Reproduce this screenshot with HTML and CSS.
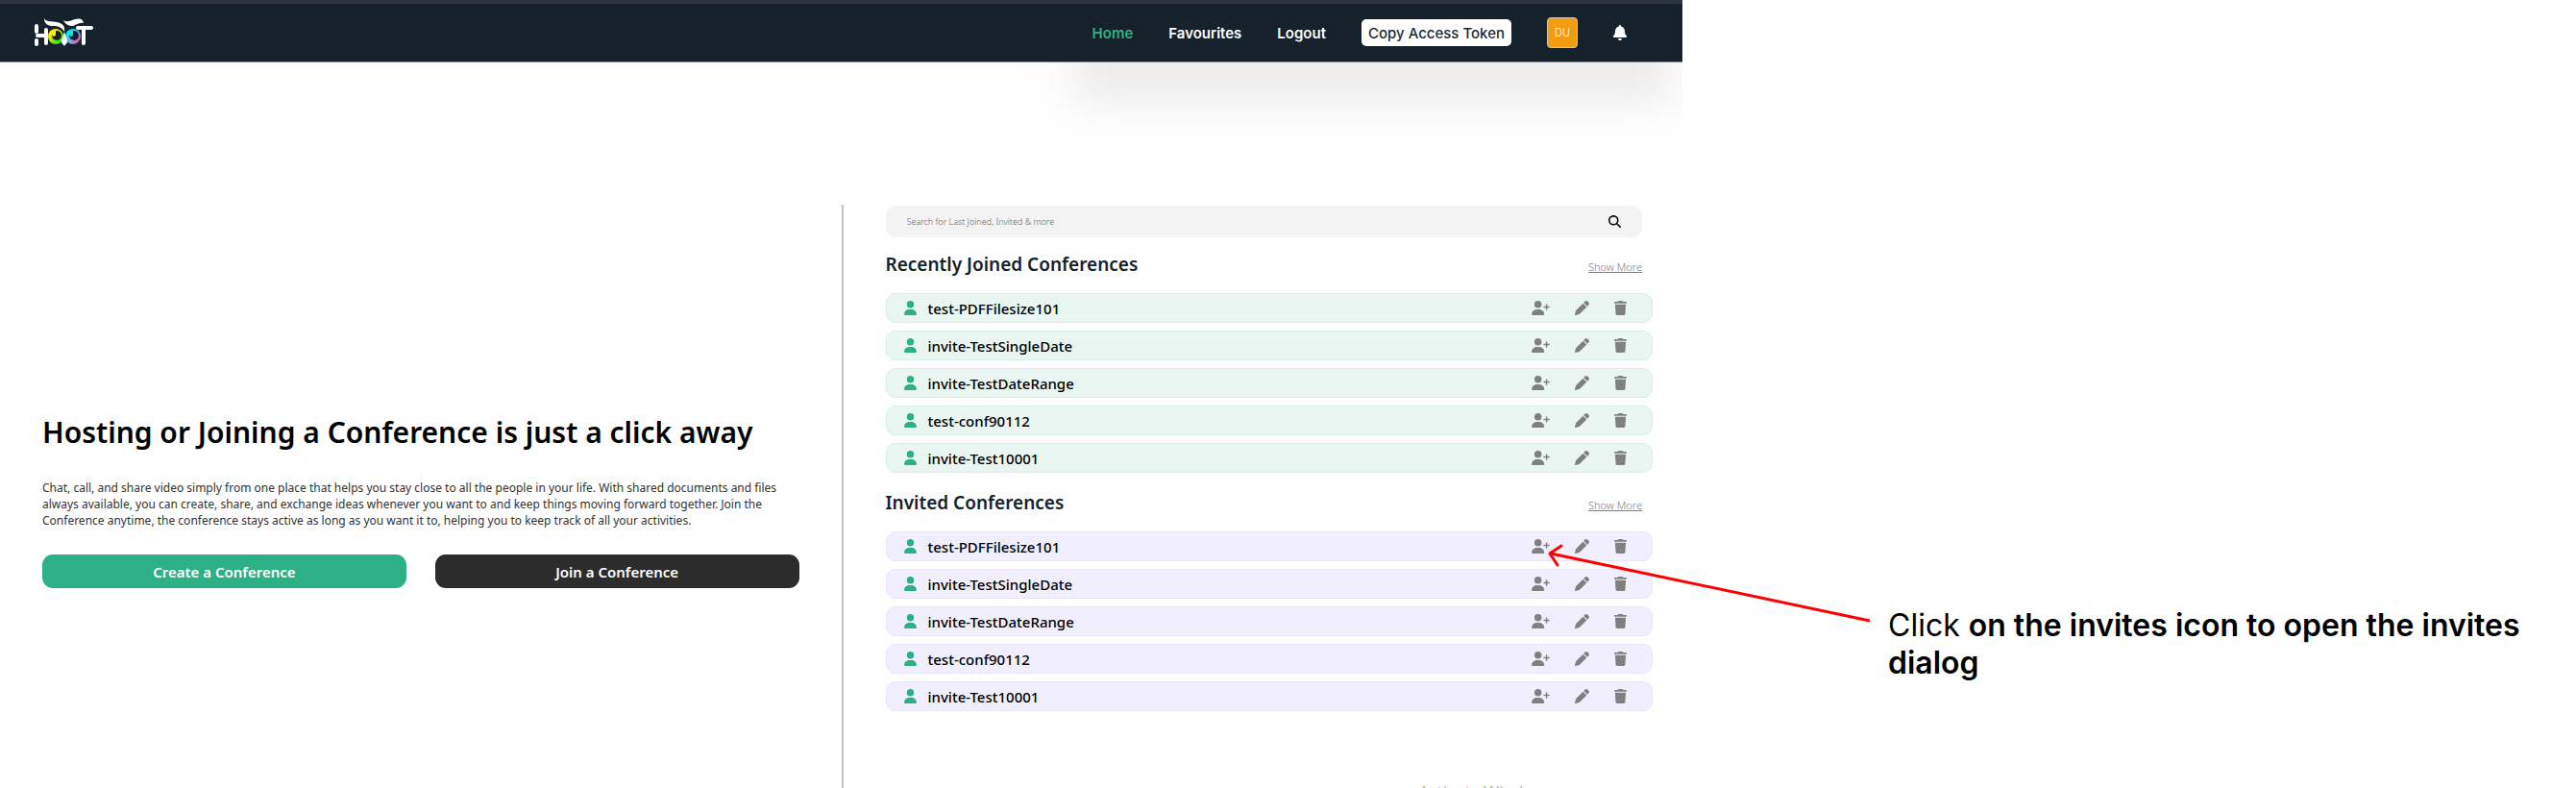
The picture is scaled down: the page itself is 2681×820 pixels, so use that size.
FILE: index.html
```html
<!DOCTYPE html>
<html lang="en">
<head>
<meta charset="utf-8">
<title>Hoot</title>
<link rel="stylesheet" href="styles.css">
</head>
<body>
<svg class="sprite" aria-hidden="true">
  <symbol id="user" viewBox="0 0 448 512"><path d="M224 256A128 128 0 1 0 224 0a128 128 0 1 0 0 256zm-45.700 48C79.800 304 0 383.800 0 482.300C0 498.700 13.300 512 29.700 512H418.300c16.400 0 29.700-13.300 29.700-29.700C448 383.800 368.200 304 269.700 304H178.300z"/></symbol>
  <symbol id="user-plus" viewBox="0 0 640 512"><path d="M96 128a128 128 0 1 1 256 0A128 128 0 1 1 96 128zM0 482.300C0 383.800 79.800 304 178.300 304h91.400C368.200 304 448 383.800 448 482.300c0 16.400-13.300 29.700-29.700 29.700H29.700C13.300 512 0 498.700 0 482.300zM504 312V248H440c-13.300 0-24-10.700-24-24s10.700-24 24-24h64V136c0-13.300 10.700-24 24-24s24 10.700 24 24v64h64c13.300 0 24 10.700 24 24s-10.700 24-24 24H552v64c0 13.300-10.700 24-24 24s-24-10.700-24-24z"/></symbol>
  <symbol id="pen" viewBox="0 0 512 512"><path d="M362.700 19.300L314.300 67.700 444.300 197.700l48.400-48.400c25-25 25-65.500 0-90.500L453.300 19.300c-25-25-65.500-25-90.500 0zm-71 71L58.600 323.500c-10.400 10.400-18 23.300-22.200 37.400L1 481.200C-1.500 489.700 .8 498.800 7 505s15.300 8.500 23.700 6.100l120.300-35.400c14.100-4.200 27-11.800 37.400-22.200L421.700 220.300 291.700 90.300z"/></symbol>
  <symbol id="trash" viewBox="0 0 448 512"><path d="M135.200 17.700L128 32H32C14.300 32 0 46.300 0 64S14.300 96 32 96H416c17.700 0 32-14.300 32-32s-14.300-32-32-32H320l-7.200-14.300C307.400 6.800 296.300 0 284.200 0H163.800c-12.100 0-23.200 6.800-28.600 17.700zM416 128H32L53.200 467c1.600 25.300 22.600 45 47.900 45H346.900c25.300 0 46.300-19.700 47.900-45L416 128z"/></symbol>
  <symbol id="bell" viewBox="0 0 448 512"><path d="M224 0c-17.700 0-32 14.300-32 32V51.200C119 66 64 130.600 64 208v18.800c0 47-17.300 92.400-48.500 127.600l-7.400 8.300c-8.400 9.400-10.400 22.900-5.300 34.400S19.400 416 32 416H416c12.600 0 24-7.400 29.200-18.900s3.100-25-5.300-34.400l-7.400-8.300C401.300 319.200 384 273.900 384 226.800V208c0-77.400-55-142-128-156.800V32c0-17.700-14.300-32-32-32zm45.300 493.300c12-12 18.700-28.300 18.700-45.300H160c0 17 6.700 33.300 18.700 45.300s28.300 18.700 45.300 18.700s33.300-6.700 45.300-18.700z"/></symbol>
  <symbol id="search" viewBox="0 0 512 512"><path d="M416 208c0 45.900-14.900 88.300-40 122.700L502.600 457.400c12.500 12.500 12.500 32.800 0 45.300s-32.800 12.500-45.300 0L330.700 376c-34.400 25.200-76.800 40-122.700 40C93.100 416 0 322.900 0 208S93.100 0 208 0S416 93.100 416 208zM208 352a144 144 0 1 0 0-288 144 144 0 1 0 0 288z"/></symbol>
</svg>
<div class="page">
  <div class="app">
    <div class="glow"></div>
    <header class="topbar">
      <a class="brand" href="#" aria-label="Hoot">
        <svg width="64" height="32" viewBox="0 0 64 32">
          <defs>
            <linearGradient id="eye-left" x1="0" y1="0" x2="1" y2="1"><stop offset=".25" stop-color="#ffee00"/><stop offset=".8" stop-color="#2be80c"/></linearGradient>
            <linearGradient id="eye-right" x1="0" y1="0" x2="1" y2="1"><stop offset=".3" stop-color="#0be3f0"/><stop offset=".6" stop-color="#7fa8dc"/><stop offset=".85" stop-color="#e64aa8"/></linearGradient>
          </defs>
          <g fill="#fff">
            <rect x="2" y="7" width="4" height="10" rx="2"/><rect x="2" y="22" width="4" height="8" rx="2"/>
            <rect x="3" y="17" width="12" height="4" rx="2"/>
            <rect x="12" y="11" width="4" height="18" rx="2"/>
          </g>
          <circle cx="24" cy="20" r="8" fill="url(#eye-left)"/><circle cx="25" cy="19" r="5" fill="#15212b"/><path d="M18 14h6v5l-3 1z" fill="#ffee00"/>
          <circle cx="42" cy="20" r="8" fill="url(#eye-right)"/><circle cx="43" cy="19" r="5" fill="#15212b"/><path d="M36 14h6v5l-3 1z" fill="#0be3f0"/>
          <g fill="#fff">
            <path d="M12 1c2 4 8 3 13 4 6 1 9 4 8 10-3-5-7-6-12-6-5 0-9-2-9-8z"/>
            <path d="M32 3c4 3 8 0 12-1 4-1 8-1 9 4-5-1-7 2-11 3-5 0-8-2-10-6z"/>
            <path d="M33 15c1 4 3 7 3 10s-2 3-3 5c-1-2-3-2-3-5s2-6 3-10z"/>
            <rect x="45" y="9" width="18" height="4" rx="2"/><rect x="51" y="9" width="4" height="20" rx="2"/>
          </g>
        </svg>
      </a>
      <nav class="menu">
        <a class="link active" href="#">Home</a>
        <a class="link" href="#">Favourites</a>
        <a class="link" href="#">Logout</a>
        <button class="token" type="button">Copy Access Token</button>
        <button class="avatar" type="button">DU</button>
        <button class="icon-btn bell" type="button" aria-label="Notifications"><svg width="14" height="16"><use href="#bell"/></svg></button>
      </nav>
    </header>
    <main class="main">
      <section class="hero">
        <h1>Hosting or Joining a Conference is just a click away</h1>
        <p>Chat, call, and share video simply from one place that helps you stay close to all the people in your life. With shared documents and files always available, you can create, share, and exchange ideas whenever you want to and keep things moving forward together. Join the Conference anytime, the conference stays active as long as you want it to, helping you to keep track of all your activities.</p>
        <div class="actions">
          <button class="action create" type="button">Create a Conference</button>
          <button class="action join" type="button">Join a Conference</button>
        </div>
      </section>
      <section class="lists">
        <form class="search" role="search">
          <input type="search" aria-label="Search conferences" placeholder="Search for Last Joined, Invited &amp; more">
          <button class="icon-btn dark" type="button" aria-label="Search"><svg width="13" height="13"><use href="#search"/></svg></button>
        </form>
        <div class="list-head"><h2>Recently Joined Conferences</h2><a href="#">Show More</a></div>
        <ul class="rows recent">
          <li><svg class="person" width="13" height="15"><use href="#user"/></svg><span>test-PDFFilesize101</span><button class="icon-btn" type="button" aria-label="Invite"><svg width="19" height="15"><use href="#user-plus"/></svg></button><button class="icon-btn" type="button" aria-label="Edit"><svg width="15" height="15"><use href="#pen"/></svg></button><button class="icon-btn" type="button" aria-label="Delete"><svg width="13" height="15"><use href="#trash"/></svg></button></li>
          <li><svg class="person" width="13" height="15"><use href="#user"/></svg><span>invite-TestSingleDate</span><button class="icon-btn" type="button" aria-label="Invite"><svg width="19" height="15"><use href="#user-plus"/></svg></button><button class="icon-btn" type="button" aria-label="Edit"><svg width="15" height="15"><use href="#pen"/></svg></button><button class="icon-btn" type="button" aria-label="Delete"><svg width="13" height="15"><use href="#trash"/></svg></button></li>
          <li><svg class="person" width="13" height="15"><use href="#user"/></svg><span>invite-TestDateRange</span><button class="icon-btn" type="button" aria-label="Invite"><svg width="19" height="15"><use href="#user-plus"/></svg></button><button class="icon-btn" type="button" aria-label="Edit"><svg width="15" height="15"><use href="#pen"/></svg></button><button class="icon-btn" type="button" aria-label="Delete"><svg width="13" height="15"><use href="#trash"/></svg></button></li>
          <li><svg class="person" width="13" height="15"><use href="#user"/></svg><span>test-conf90112</span><button class="icon-btn" type="button" aria-label="Invite"><svg width="19" height="15"><use href="#user-plus"/></svg></button><button class="icon-btn" type="button" aria-label="Edit"><svg width="15" height="15"><use href="#pen"/></svg></button><button class="icon-btn" type="button" aria-label="Delete"><svg width="13" height="15"><use href="#trash"/></svg></button></li>
          <li><svg class="person" width="13" height="15"><use href="#user"/></svg><span>invite-Test10001</span><button class="icon-btn" type="button" aria-label="Invite"><svg width="19" height="15"><use href="#user-plus"/></svg></button><button class="icon-btn" type="button" aria-label="Edit"><svg width="15" height="15"><use href="#pen"/></svg></button><button class="icon-btn" type="button" aria-label="Delete"><svg width="13" height="15"><use href="#trash"/></svg></button></li>
        </ul>
        <div class="list-head"><h2>Invited Conferences</h2><a href="#">Show More</a></div>
        <ul class="rows invited">
          <li><svg class="person" width="13" height="15"><use href="#user"/></svg><span>test-PDFFilesize101</span><button class="icon-btn" type="button" aria-label="Invite"><svg width="19" height="15"><use href="#user-plus"/></svg></button><button class="icon-btn" type="button" aria-label="Edit"><svg width="15" height="15"><use href="#pen"/></svg></button><button class="icon-btn" type="button" aria-label="Delete"><svg width="13" height="15"><use href="#trash"/></svg></button></li>
          <li><svg class="person" width="13" height="15"><use href="#user"/></svg><span>invite-TestSingleDate</span><button class="icon-btn" type="button" aria-label="Invite"><svg width="19" height="15"><use href="#user-plus"/></svg></button><button class="icon-btn" type="button" aria-label="Edit"><svg width="15" height="15"><use href="#pen"/></svg></button><button class="icon-btn" type="button" aria-label="Delete"><svg width="13" height="15"><use href="#trash"/></svg></button></li>
          <li><svg class="person" width="13" height="15"><use href="#user"/></svg><span>invite-TestDateRange</span><button class="icon-btn" type="button" aria-label="Invite"><svg width="19" height="15"><use href="#user-plus"/></svg></button><button class="icon-btn" type="button" aria-label="Edit"><svg width="15" height="15"><use href="#pen"/></svg></button><button class="icon-btn" type="button" aria-label="Delete"><svg width="13" height="15"><use href="#trash"/></svg></button></li>
          <li><svg class="person" width="13" height="15"><use href="#user"/></svg><span>test-conf90112</span><button class="icon-btn" type="button" aria-label="Invite"><svg width="19" height="15"><use href="#user-plus"/></svg></button><button class="icon-btn" type="button" aria-label="Edit"><svg width="15" height="15"><use href="#pen"/></svg></button><button class="icon-btn" type="button" aria-label="Delete"><svg width="13" height="15"><use href="#trash"/></svg></button></li>
          <li><svg class="person" width="13" height="15"><use href="#user"/></svg><span>invite-Test10001</span><button class="icon-btn" type="button" aria-label="Invite"><svg width="19" height="15"><use href="#user-plus"/></svg></button><button class="icon-btn" type="button" aria-label="Edit"><svg width="15" height="15"><use href="#pen"/></svg></button><button class="icon-btn" type="button" aria-label="Delete"><svg width="13" height="15"><use href="#trash"/></svg></button></li>
        </ul>
        <p class="watermark">Activate Windows</p>
      </section>
    </main>
  </div>
  <aside class="note">
    <svg class="arrow" width="340" height="84" viewBox="0 0 340 84"><path d="M336 74L4 4"/><path d="M15-4L3 4l8 12" stroke-linecap="round" stroke-linejoin="round"/></svg>
    <p>Click <strong>on the invites icon to open the invites dialog</strong></p>
  </aside>
</div>
</body>
</html>
```
FILE: styles.css
```css
* { box-sizing: border-box; }

body {
  margin: 0;
  background: #fff;
  color: #000;
  font-family: "Noto Sans", sans-serif;
}

h1, h2, p, ul { margin: 0; padding: 0; }
ul { list-style: none; }
svg { display: block; fill: currentColor; }
button { font: inherit; border: 0; cursor: pointer; }

.sprite { position: absolute; width: 0; height: 0; }

.page {
  display: grid;
  grid-template-columns: minmax(0, 1751fr) minmax(0, 930fr);
  height: 100vh;
  overflow: hidden;
}

.app {
  position: relative;
  overflow: hidden;
  display: flex;
  flex-direction: column;
}

/* Soft shadow that falls from under the top bar */
.glow {
  position: absolute;
  top: -60px;
  right: 10px;
  width: 626px;
  height: 170px;
  background: #ededed;
  filter: blur(22px);
}

.topbar {
  position: relative;
  display: flex;
  align-items: center;
  justify-content: space-between;
  flex: none;
  height: 65px;
  padding: 0 58px 0 34px;
  background: #15212b;
  border-top: 4px solid #2f3241;
  border-bottom: 1px solid #7d868c;
  font-family: Inter, sans-serif;
}

.menu {
  display: flex;
  align-items: center;
  gap: 37px;
}

.link {
  color: #fff;
  font-size: 15px;
  font-weight: 600;
  text-decoration: none;
}

.link.active { color: #2eb086; }

.token {
  height: 28px;
  padding: 0 7px;
  border-radius: 5px;
  background: #fff;
  color: #212b35;
  font-size: 15px;
  font-weight: 500;
}

.avatar {
  width: 32px;
  height: 32px;
  padding: 0;
  border: 1px solid #cfc5b0;
  border-radius: 4px;
  background: #f39c12;
  color: #fff;
  font-size: 11px;
  font-weight: 300;
}

.icon-btn {
  padding: 0;
  background: none;
  color: #808080;
}

.bell { color: #fff; }
.dark { color: #111; }

.main {
  position: relative;
  flex: none;
  display: grid;
  grid-template-columns: 1fr 1fr;
  padding-top: 148px;
}

.hero { padding: 211px 44px 0; }

h1 {
  font-size: 30px;
  line-height: 52px;
  font-weight: 600;
}

.hero p {
  margin-top: 23px;
  color: #333;
  font-size: 12px;
  line-height: 17px;
}

.actions {
  display: grid;
  grid-template-columns: 1fr 1fr;
  gap: 30px;
  margin-top: 27px;
}

.action {
  height: 35px;
  border-radius: 11px;
  color: #fff;
  font-size: 15px;
  font-weight: 600;
}

.create { background: #2eb086; }
.join { background: #2c2c2c; }

.lists {
  border-left: 2px solid #c4c4c4;
  padding: 1px 31px 0 44px;
}

.search {
  display: flex;
  align-items: center;
  height: 33px;
  margin: 0 11px 15px 0;
  padding: 0 22px;
  border-radius: 11px;
  background: #f3f3f3;
}

.search input {
  flex: 1;
  padding: 0;
  border: 0;
  outline: 0;
  background: none;
  font: 300 9px/16px "Noto Sans", sans-serif;
}

.search input::placeholder { color: #666; }

.list-head {
  display: flex;
  align-items: baseline;
  justify-content: space-between;
  margin: 0 11px 17px 0;
}

h2 {
  color: #15212b;
  font-size: 19px;
  line-height: 26px;
  font-weight: 600;
}

.list-head a {
  color: #808080;
  font-size: 11px;
  font-weight: 300;
}

.rows {
  display: grid;
  gap: 8px;
  margin-bottom: 18px;
}

.rows li {
  display: flex;
  align-items: center;
  height: 31px;
  padding: 0 26px 0 18px;
  border: 1px solid;
  border-radius: 10px;
  font-size: 15px;
  font-weight: 500;
}

.rows span { flex: 1; margin-left: 12px; }
.rows .icon-btn + .icon-btn { margin-left: 26px; }
.person { color: #2eb086; }

.recent li { background: #e9f6f2; border-color: #d5f0e7; }
.invited li { background: #f1eefd; border-color: #e8e3ff; }

.watermark {
  margin: 72px 0 0 555px;
  color: #b5b5b5;
  font-size: 17px;
  line-height: 24px;
}

.note {
  position: relative;
  padding: 631px 40px 0 214px;
  font-family: Inter, sans-serif;
  font-size: 32px;
  line-height: 39px;
}

.note strong { font-weight: 560; }

/* Points from the note back to the first invite icon */
.arrow {
  position: absolute;
  right: 100%;
  top: 572px;
  margin-right: -199px;
  overflow: visible;
  fill: none;
  stroke: #f00;
  stroke-width: 3px;
}
```
